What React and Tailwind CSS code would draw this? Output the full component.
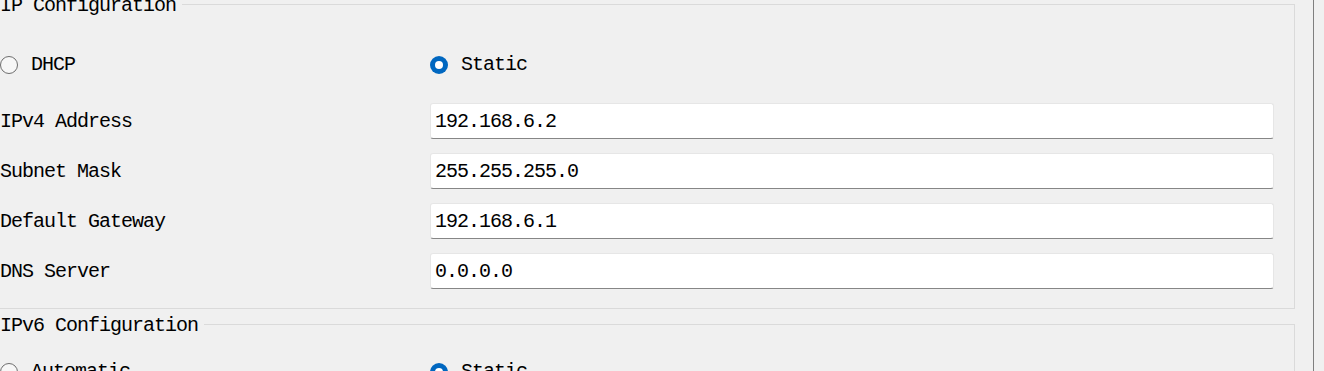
import React from "react";

const font = { fontFamily: '"Liberation Mono", "DejaVu Sans Mono", monospace' };

function Radio({ checked, label }) {
  return (
    <div className="flex items-center h-[24px]">
      {checked ? (
        <div className="w-[18px] h-[18px] rounded-full bg-[#0067c0] flex items-center justify-center shrink-0">
          <div className="w-[8px] h-[8px] rounded-full bg-white" />
        </div>
      ) : (
        <div className="w-[18px] h-[18px] rounded-full border border-[#6e6e6e] bg-[#f7f7f7] shrink-0" />
      )}
      <span className="ml-[13px] text-[20px] tracking-[-1px] leading-[24px] text-black">{label}</span>
    </div>
  );
}

function Field({ label, value }) {
  return (
    <div className="flex items-center h-[36px]">
      <div className="w-[430px] shrink-0 text-[20px] tracking-[-1px] leading-[24px] text-black pt-[1px]">{label}</div>
      <div className="flex-1 h-[36px] bg-white rounded-[3px] border border-[#e6e6e6] border-b-[#868686] flex items-center pl-[4px] pt-[2px] text-[20px] tracking-[-1px] leading-[24px] text-black">
        {value}
      </div>
    </div>
  );
}

function GroupBox({ title, className, children }) {
  return (
    <div className={"ml-[-10px] w-[1305px] border border-[#dadada] pl-[9px] pr-[20px] " + className}>
      <div className="-mt-[9px] w-fit pr-[6px] bg-[#f0f0f0] text-[20px] tracking-[-1px] leading-[20px] text-black">
        {title}
      </div>
      {children}
    </div>
  );
}

export default function App() {
  return (
    <div className="w-[1324px] h-[371px] bg-[#f0f0f0] overflow-hidden flex" style={font}>
      <div className="w-[1313px] shrink-0 flex flex-col">
        <GroupBox title="IP Configuration" className="mt-[4px] pb-[19px]">
          <div className="flex mt-[37px]">
            <div className="w-[430px] shrink-0">
              <Radio checked={false} label="DHCP" />
            </div>
            <Radio checked label="Static" />
          </div>
          <div className="flex flex-col gap-[14px] mt-[26px]">
            <Field label="IPv4 Address" value="192.168.6.2" />
            <Field label="Subnet Mask" value="255.255.255.0" />
            <Field label="Default Gateway" value="192.168.6.1" />
            <Field label="DNS Server" value="0.0.0.0" />
          </div>
        </GroupBox>
        <GroupBox title="IPv6 Configuration" className="mt-[15px] pb-[40px]">
          <div className="flex mt-[24px]">
            <div className="w-[430px] shrink-0">
              <Radio checked={false} label="Automatic" />
            </div>
            <Radio checked label="Static" />
          </div>
        </GroupBox>
      </div>
      <div className="w-px h-full bg-[#7f7f7f] shrink-0" />
      <div className="flex-1" />
    </div>
  );
}
